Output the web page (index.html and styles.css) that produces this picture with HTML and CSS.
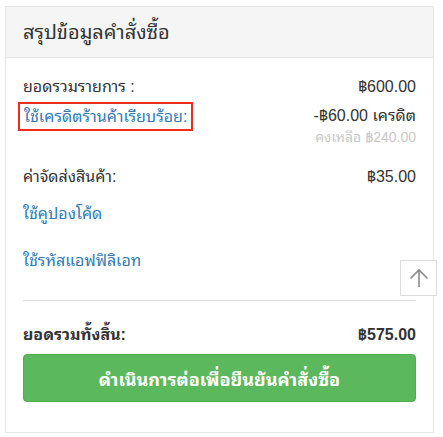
FILE: index.html
```html
<!DOCTYPE html>
<html lang="th">
<head>
<meta charset="utf-8">
<link rel="stylesheet" href="styles.css">
</head>
<body>
<div class="card">
  <div class="card-head"><h2 class="title">สรุปข้อมูลคำสั่งซื้อ</h2></div>
  <div class="card-body">
    <div class="row r-sub">
      <span>ยอดรวมรายการ :</span>
      <span>฿600.00</span>
    </div>
    <div class="row r-credit">
      <span class="credit-link">ใช้เครดิตร้านค้าเรียบร้อย:</span>
      <div class="credit-val">
        <span>-฿60.00 เครดิต</span>
        <span class="remain">คงเหลือ ฿240.00</span>
      </div>
    </div>
    <div class="row r-ship">
      <span>ค่าจัดส่งสินค้า:</span>
      <span>฿35.00</span>
    </div>
    <div class="link r-coupon">ใช้คูปองโค้ด</div>
    <div class="link r-aff">ใช้รหัสแอฟฟิลิเอท</div>
    <div class="divider"></div>
    <div class="row r-total">
      <span>ยอดรวมทั้งสิ้น:</span>
      <span>฿575.00</span>
    </div>
    <button class="btn">ดำเนินการต่อเพื่อยืนยันคำสั่งซื้อ</button>
  </div>
</div>
<a class="to-top" href="#">
  <svg width="22" height="22" viewBox="0 0 22 22"><path d="M11 20V3M2.5 11.5L11 3l8.5 8.5" fill="none" stroke="#8a8a8a" stroke-width="1.6"/></svg>
</a>
</body>
</html>
```
FILE: styles.css
```css
html, body { margin: 0; padding: 0; background: #fff; }
body {
  font-family: "Liberation Sans", Arial, "Noto Sans Thai Looped", "Loma", "Garuda", "Tlwg Typo", "Noto Sans Thai", sans-serif;
  color: #333;
  font-size: 16px;
  padding: 6px 9px 0 5px;
}
.card {
  border: 1px solid #e6e6e6;
  box-sizing: border-box;
  width: 429px;
  height: 427px;
}
.card-head {
  background: #f5f5f5;
  border-bottom: 1px solid #e6e6e6;
  height: 50px;
  display: flex;
  align-items: center;
  padding: 0 17px;
}
.title { margin: 0; font-size: 20px; font-weight: normal; color: #333; line-height: 1; }
.card-body { padding: 0 17px; display: flex; flex-direction: column; }
.row { display: flex; justify-content: space-between; align-items: flex-start; line-height: 20px; }
.r-sub { margin-top: 19px; }
.r-credit { margin-top: 5px; }
.credit-link {
  color: #337ab7;
  border: 2px solid #ef2d1c;
  padding: 3px 4px 3px 4px;
  margin-left: -5px;
  line-height: 19px;
}
.credit-val { display: flex; flex-direction: column; align-items: flex-end; padding-top: 4px; }
.remain { color: #c8c8c8; font-size: 14px; line-height: 18px; margin-top: 2px; }
.r-ship { margin-top: 21px; }
.link { color: #337ab7; line-height: 20px; }
.r-coupon { margin-top: 17px; }
.r-aff { margin-top: 27px; }
.divider { display: block; flex: none; height: 1px; background: #e0e0e0; margin-top: 29px; }
.r-total { margin-top: 24px; font-weight: bold; }
.btn {
  margin-top: 9px;
  height: 48px;
  background: #5cb85c;
  border: 1px solid #4cae4c;
  border-radius: 4px;
  color: #fff;
  font: bold 18px "Liberation Sans", Arial, "Noto Sans Thai Looped", "Loma", "Garuda", "Noto Sans Thai", sans-serif;
  width: 100%;
}
.to-top {
  position: fixed;
  left: 400px;
  top: 260px;
  width: 37px;
  height: 36px;
  box-sizing: border-box;
  border: 1px solid #ddd;
  background: #fff;
  display: flex;
  align-items: center;
  justify-content: center;
}
```
